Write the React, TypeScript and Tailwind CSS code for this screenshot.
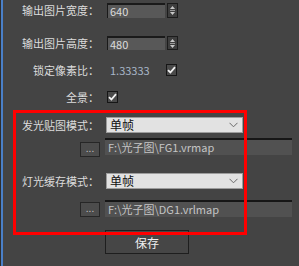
const font = { fontFamily: '"Noto Sans CJK SC", "Noto Sans", sans-serif' };

const Label = ({ text }: { text: string }) => (
  <div className="w-[96px] shrink-0 text-right text-[11px] leading-none text-[#dcdcdc]">{text}</div>
);

const Spinner = () => (
  <div className="ml-[2px] flex h-full w-[11px] items-center justify-center border border-[#1c1c1c] bg-[#3e3e3e]">
    <svg width="7" height="11" viewBox="0 0 7 11">
      <path d="M3.5 1 L6 4 H1 Z" fill="#c8c8c8" />
      <rect x="1" y="5" width="5" height="1" fill="#9a9a9a" />
      <path d="M1 7 H6 L3.5 10 Z" fill="#c8c8c8" />
    </svg>
  </div>
);

const Check = () => (
  <div className="flex h-[12px] w-[11px] items-center justify-center border border-[#161616] bg-[#4a4a4a]">
    <svg width="9" height="8" viewBox="0 0 9 8">
      <path d="M1 4.2 L3.4 6.5 L8 1.2" stroke="#f2f2f2" strokeWidth="1.8" fill="none" />
    </svg>
  </div>
);

const NumberInput = ({ value }: { value: string }) => (
  <div className="ml-[8px] flex h-full items-stretch">
    <div className="flex w-[58px] items-center border-t-2 border-l border-[#1a1a1a] bg-[#585858] pl-[2px] text-[11px] leading-none text-[#dcdcdc]">
      {value}
    </div>
    <Spinner />
  </div>
);

const Dropdown = () => (
  <div className="ml-[7px] flex h-full w-[137px] items-center justify-between border border-[#9c9c9c] bg-[#e2e2e2] pl-[3px] pr-[4px] text-[12px] leading-none text-[#111]">
    <span>单帧</span>
    <svg width="9" height="6" viewBox="0 0 9 6">
      <path d="M0.5 0.8 L4.5 4.8 L8.5 0.8" stroke="#6a6a6a" strokeWidth="1" fill="none" />
    </svg>
  </div>
);

const PathRow = ({ path, btnTop, className }: { path: string; btnTop: string; className: string }) => (
  <div className={`flex items-start ${className}`}>
    <div
      className={`ml-[77px] flex h-[15px] w-[20px] items-end justify-center border border-[#262626] bg-[#4c4c4c] pb-[3px] text-[10px] leading-none text-[#bdbdbd] ${btnTop}`}
    >
      ...
    </div>
    <div className="ml-[5px] flex h-[17px] w-[187px] items-center border-t-2 border-[#161616] bg-[#515151] pl-[3px] text-[11px] leading-none text-[#c4c4c4]">
      {path}
    </div>
  </div>
);

export default function App() {
  return (
    <div className="relative flex h-[266px] w-[299px] overflow-hidden bg-[#444444]" style={font}>
      <div className="w-[1px] bg-[#2e2e2e]" />
      <div className="w-[2px] bg-[#4a80c8]" />
      <div className="flex flex-col">
        <div className="mt-[3px] flex h-[15px] items-center">
          <Label text="输出图片宽度：" />
          <NumberInput value="640" />
        </div>
        <div className="mt-[18px] flex h-[14px] items-center">
          <Label text="输出图片高度：" />
          <NumberInput value="480" />
        </div>
        <div className="mt-[14px] flex h-[12px] items-center">
          <Label text="锁定像素比：" />
          <div className="ml-[11px] w-[56px] text-[11px] leading-none text-[#a8b6c8]">1.33333</div>
          <Check />
        </div>
        <div className="mt-[15px] flex h-[12px] items-center">
          <Label text="全景：" />
          <div className="ml-[8px]">
            <Check />
          </div>
        </div>
        <div className="mt-[14px] flex h-[16px] items-center">
          <Label text="发光贴图模式：" />
          <Dropdown />
        </div>
        <PathRow path="F:\光子图\FG1.vrmap" btnTop="mt-[4px]" className="mt-[5px]" />
        <div className="mt-[16px] flex h-[16px] items-center">
          <Label text="灯光缓存模式：" />
          <Dropdown />
        </div>
        <PathRow path="F:\光子图\DG1.vrlmap" btnTop="mt-[2px]" className="mt-[11px]" />
        <button className="ml-[102px] mt-[13px] flex h-[24px] w-[84px] items-center justify-center border border-[#1e1e1e] bg-[#464646] pt-[2px] text-[12px] leading-none text-[#f0f0f0]">
          保存
        </button>
      </div>
      <div className="pointer-events-none absolute left-[13px] top-[110px] h-[125px] w-[234px] border-[3px] border-[#ff0000]" />
    </div>
  );
}
